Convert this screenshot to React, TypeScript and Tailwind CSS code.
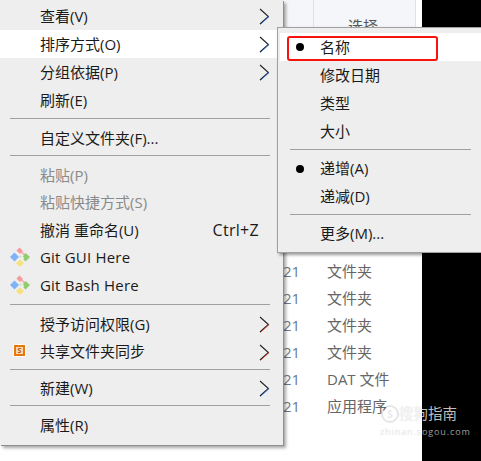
const sans = "font-['Open_Sans','Noto_Sans_CJK_SC',sans-serif]";

function Chevron({ tint = '#1e73d8' }: { tint?: string }) {
  return (
    <svg width="11" height="17" viewBox="0 0 11 17" className="absolute right-[13px] top-[6px]" fill="none">
      <path d="M1 1l8.4 7.5L1 16" stroke="#222" strokeWidth="1.1" />
      <path d="M1.6 16.2L10 8.6" stroke={tint} strokeWidth="0.9" />
    </svg>
  );
}

function GitIcon() {
  return (
    <svg width="20" height="20" viewBox="0 0 20 20" className="absolute left-[10px] top-[3.5px]">
      <path d="M4.5 5.5L9 10l-4.5 4.5L0 10z" fill="#7fb2f7" />
      <path d="M9.5 0.5L13 4l-3 3-3.5-3.5z" fill="#f59a9a" />
      <path d="M10.6 5.4l1.6-1.1 3 3-1.4 1.3z" fill="#f7b3b3" />
      <path d="M15.5 6L20 10l-4.5 4.5-2.2-2.3 1-1.2-1.4-1.6z" fill="#8fce6b" />
      <path d="M10 12.5l4 3.8-4 3.7-4-3.7z" fill="#f7e07e" />
      <path d="M10.4 8.2l1.4 1.4-1.4 1.4-1.4-1.4z" fill="#cfe6b8" />
    </svg>
  );
}

function SyncIcon() {
  return (
    <div className="absolute left-[13px] top-[6px] flex h-[13px] w-[13px] items-center justify-center bg-white">
      <div className="flex h-[11px] w-[11px] items-center justify-center border-2 border-[#e8780e] bg-[#f7d9b0] text-[7px] font-bold leading-none text-[#c8500a]">
        S
      </div>
    </div>
  );
}

function Row({ label, hint, icon, arrow, disabled, short }: { label: string; hint?: string; icon?: React.ReactNode; arrow?: React.ReactNode; disabled?: boolean; short?: boolean }) {
  return (
    <div className={`relative flex items-center pl-10 text-[15px] ${short ? 'h-[27.6px]' : 'h-[28px]'} ${disabled ? 'text-[#8a8a8a]' : 'text-[#1a1a1a]'}`}>
      {icon}
      <span className={icon && !hint && label.startsWith('Git') ? 'tracking-[0.2px]' : ''}>{label}</span>
      {hint && <span className="absolute right-[24px] text-[16px] tracking-[0.3px]">{hint}</span>}
      {arrow}
    </div>
  );
}

function Sep({ tight }: { tight?: boolean }) {
  return <div className={`mb-[5px] ml-[10px] mr-[13px] h-px bg-[#a0a0a0] ${tight ? 'mt-[3px]' : 'mt-1'}`} />;
}

function SubRow({ label, dot, inset }: { label: string; dot?: boolean; inset?: boolean }) {
  return (
    <div className={`relative flex h-[28px] items-center text-[15px] text-[#1a1a1a] ${inset ? 'pl-[40px]' : 'pl-[42px]'}`}>
      {dot && <div className={`absolute top-[10px] h-2 w-2 rounded-full bg-black ${inset ? 'left-[16px]' : 'left-[18px]'}`} />}
      <span>{label}</span>
    </div>
  );
}

export default function App() {
  return (
    <div className={`relative flex h-[461px] w-[481px] overflow-hidden bg-white ${sans}`}>
      {/* explorer behind the menus */}
      <div className="flex w-[422px] flex-col">
        <div className="mr-[6px] flex h-[28px] justify-end bg-[#f4f6f9]">
          <div className="w-[103px] border-x border-[#dfe3e8] pl-[34px] pt-[16px] text-[15px] leading-5 text-[#555]">选择</div>
        </div>
        <div className="mt-[230px] flex flex-col pl-[283px] text-[15px] text-[#666]">
          {['文件夹', '文件夹', '文件夹', '文件夹', 'DAT 文件', '应用程序'].map((t, i) => (
            <div key={i} className="flex h-[27px] items-center">
              <span className="w-[44px] text-[#6b7b8c]">21</span>
              <span>{t}</span>
            </div>
          ))}
        </div>
      </div>
      <div className="flex-1 bg-black" />

      {/* watermark */}
      <div className="absolute left-[381px] top-[405px] flex h-[18px] w-[18px] items-center justify-center rounded-full border-2 border-black/10 text-[11px] font-bold text-black/10">
        S
      </div>
      <div className="absolute left-[399px] top-[402px] text-[14.5px] leading-6 text-white/75 [text-shadow:0_0_1px_rgba(0,0,0,0.2)]">搜狗指南</div>
      <div className="absolute left-[380px] top-[426px] text-[9px] leading-3 tracking-[0.9px] text-white/60 [text-shadow:0_0_1px_rgba(0,0,0,0.2)]">zhinan.sogou.com</div>

      {/* main context menu */}
      <div className="absolute left-0 top-0 h-[445px] w-[283px] bg-[#eeeeee] pt-[2px] shadow-[1px_1px_0_#8f8f8f,3px_3px_3px_rgba(0,0,0,0.35)]">
        <Row label="查看(V)" arrow={<Chevron />} />
        <div className="bg-white">
          <Row label="排序方式(O)" arrow={<Chevron />} />
        </div>
        <Row label="分组依据(P)" arrow={<Chevron />} />
        <Row label="刷新(E)" />
        <Sep />
        <Row label="自定义文件夹(F)..." />
        <Sep tight />
        <Row label="粘贴(P)" disabled short />
        <Row label="粘贴快捷方式(S)" disabled short />
        <Row label="撤消 重命名(U)" hint="Ctrl+Z" short />
        <Row label="Git GUI Here" icon={<GitIcon />} short />
        <Row label="Git Bash Here" icon={<GitIcon />} short />
        <div className="mb-[5px] ml-[10px] mr-[13px] mt-[5px] h-px bg-[#a0a0a0]" />
        <Row label="授予访问权限(G)" arrow={<Chevron tint="#d8381e" />} short />
        <Row label="共享文件夹同步" icon={<SyncIcon />} arrow={<Chevron tint="#d8381e" />} short />
        <div className="mb-[4.5px] ml-[10px] mr-[13px] mt-[3.5px] h-px bg-[#a0a0a0]" />
        <Row label="新建(W)" arrow={<Chevron />} />
        <Sep tight />
        <Row label="属性(R)" />
      </div>

      {/* sort by submenu */}
      <div className="absolute left-[277px] top-[27px] h-[226px] w-[204px] border border-r-0 border-[#a0a0a0] bg-[#eeeeee] pt-[5px] shadow-[2px_2px_3px_rgba(0,0,0,0.4)]">
        <div className="ml-[2px] bg-white">
          <SubRow label="名称" dot inset />
        </div>
        <SubRow label="修改日期" />
        <SubRow label="类型" />
        <SubRow label="大小" />
        <div className="mb-[4.5px] ml-[12px] mr-[10px] mt-1 h-px bg-[#a0a0a0]" />
        <SubRow label="递增(A)" dot />
        <SubRow label="递减(D)" />
        <div className="mb-1 ml-[12px] mr-[10px] mt-[3.5px] h-px bg-[#a0a0a0]" />
        <SubRow label="更多(M)..." />
      </div>

      {/* red annotation */}
      <div className="absolute left-[287px] top-[36px] h-[25px] w-[151px] rounded-[3px] border-[2.5px] border-[#f5130c]" />
    </div>
  );
}
